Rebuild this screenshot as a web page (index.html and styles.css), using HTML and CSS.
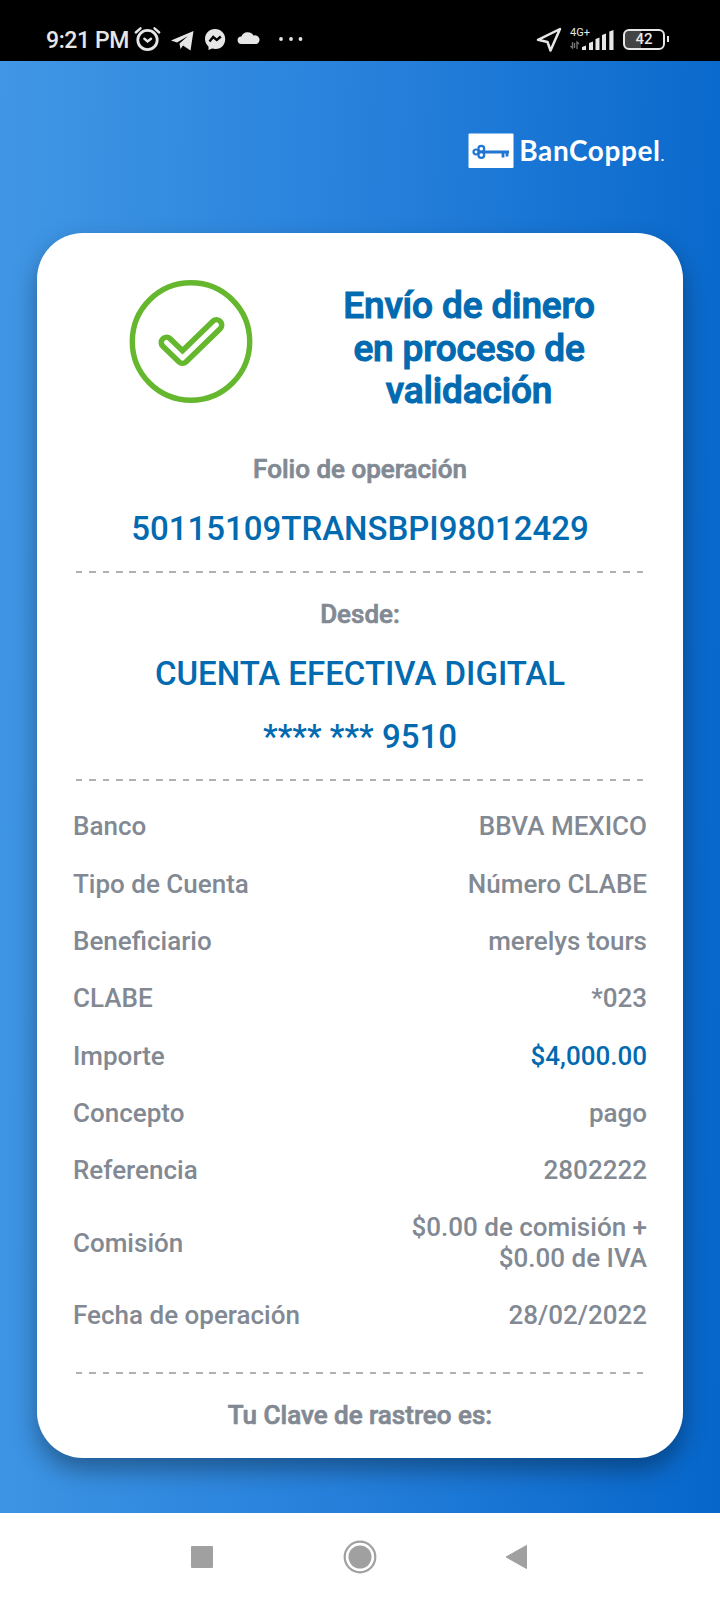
FILE: index.html
```html
<!DOCTYPE html>
<html lang="es">
<head>
    <meta charset="UTF-8">
    <meta name="viewport" content="width=device-width, initial-scale=1.0">
    <title>BanCoppel</title>
    <link rel="stylesheet" href="styles.css">
</head>
<body>
    <div class="status-bar">
        <span class="time">9:21 PM</span>
        <svg width="174" height="30" viewBox="0 0 174 30">
            <!-- alarm -->
            <g fill="none" stroke="#e6e6e6" stroke-linecap="round">
                <circle cx="13.5" cy="16" r="9.7" stroke-width="2.8"/>
                <path d="M1.8 8.5 L6.5 4.3 M25.2 8.5 L20.5 4.3" stroke-width="2.4"/>
                <path d="M10.3 14.7 L13.5 17.5 L17 14.7" stroke-width="2.4"/>
            </g>
            <!-- telegram -->
            <path d="M37 16.5 L59.5 7 L56.5 26.5 L49 21.5 L46.5 25 L45.5 19.5 L54 12 L43 18.5 Z" fill="#e6e6e6"/>
            <!-- messenger -->
            <path d="M81 5 C75 5 71 9.5 71 15 C71 18.2 72.5 20.7 74.5 22.5 L74.5 26 L78 24.5 C86.5 26.7 91.2 21 91.2 15 C91.2 9.5 87 5 81 5 Z" fill="#e6e6e6"/>
            <path d="M75.5 17.5 L79.2 13 L82.8 16 L86.8 12.5" fill="none" stroke="#000" stroke-width="2.4"/>
            <!-- cloud -->
            <path d="M107.5 20 A3.8 3.8 0 0 1 107.3 12.4 A7 7 0 0 1 119.5 11.5 A4.3 4.3 0 0 1 122.5 20 Z" fill="#e6e6e6"/>
            <g fill="#e6e6e6">
                <circle cx="147" cy="15" r="1.9"/>
                <circle cx="157" cy="15" r="1.9"/>
                <circle cx="166.5" cy="15" r="1.9"/>
            </g>
        </svg>
        <div class="status-right">
            <svg width="26" height="28" viewBox="0 0 26 28">
                <path d="M2 14.8 L24 4 L14.5 25.5 L11.5 17 Z" fill="none" stroke="#e6e6e6" stroke-width="2.5" stroke-linejoin="round"/>
            </svg>
            <div class="signal">
                <span class="network">4G+</span>
                <svg width="44" height="24" viewBox="0 0 44 24">
                    <path d="M2.5 15 V21 L0.5 19 M4.5 21 V16 M7 22 V15 L9 17" fill="none" stroke="#777" stroke-width="1.3"/>
                    <path d="M12 20 L16 18.5 V23 H12 Z M19 16 L23 14.5 V23 H19 Z M25.5 12 L29.5 10.5 V23 H25.5 Z M32 8 L36 6.5 V23 H32 Z M39.3 4.5 L43.5 3 V23 H39.3 Z" fill="#e6e6e6"/>
                </svg>
            </div>
            <div class="battery"><span>42</span></div>
        </div>
    </div>

    <div class="screen">
        <div class="brand">
            <svg width="46" height="36" viewBox="0 0 46 36">
                <rect x="0.5" y="0.5" width="45" height="34.5" rx="1" fill="#fff"/>
                <g fill="none" stroke="#2076d2" stroke-width="2.2">
                    <circle cx="8" cy="19" r="2.5"/>
                    <circle cx="13.3" cy="15.8" r="2.9"/>
                    <circle cx="13.3" cy="22" r="2.9"/>
                    <path d="M16 19 H41 M35 19 V24.5 M39 19 V23.5" stroke-width="2.8"/>
                </g>
            </svg>
            <span class="brand-name">BanCoppel<small>.</small></span>
        </div>

        <div class="card">
            <div class="card-header">
                <svg width="124" height="124" viewBox="0 0 124 124">
                    <circle cx="62" cy="61.5" r="58.7" fill="none" stroke="#65b72e" stroke-width="5.4"/>
                    <g fill="none" stroke-linecap="round" stroke-linejoin="round">
                        <path d="M37.5 62.5 L53.5 78 L87.5 45" stroke="#65b72e" stroke-width="16"/>
                        <path d="M37.5 62.5 L53.5 78 L87.5 45" stroke="#fff" stroke-width="5"/>
                    </g>
                </svg>
                <h1>Envío de dinero en proceso de validación</h1>
            </div>

            <h2>Folio de operación</h2>
            <p class="highlight">50115109TRANSBPI98012429</p>
            <div class="divider"></div>

            <h2>Desde:</h2>
            <p class="highlight">CUENTA EFECTIVA DIGITAL</p>
            <p class="highlight">**** *** 9510</p>
            <div class="divider"></div>

            <div class="details">
                <div class="row">
                    <span>Banco</span>
                    <span>BBVA MEXICO</span>
                </div>
                <div class="row">
                    <span>Tipo de Cuenta</span>
                    <span>Número CLABE</span>
                </div>
                <div class="row">
                    <span>Beneficiario</span>
                    <span>merelys tours</span>
                </div>
                <div class="row">
                    <span>CLABE</span>
                    <span>*023</span>
                </div>
                <div class="row">
                    <span>Importe</span>
                    <span class="amount">$4,000.00</span>
                </div>
                <div class="row">
                    <span>Concepto</span>
                    <span>pago</span>
                </div>
                <div class="row">
                    <span>Referencia</span>
                    <span>2802222</span>
                </div>
                <div class="row">
                    <span>Comisión</span>
                    <span>$0.00 de comisión +<br>$0.00 de IVA</span>
                </div>
                <div class="row">
                    <span>Fecha de operación</span>
                    <span>28/02/2022</span>
                </div>
            </div>
            <div class="divider"></div>

            <h2>Tu Clave de rastreo es:</h2>
        </div>
    </div>

    <div class="nav-bar">
        <svg width="34" height="34" viewBox="0 0 34 34">
            <rect x="6" y="6" width="22" height="22" rx="1" fill="#a0a0a0"/>
        </svg>
        <svg width="34" height="34" viewBox="0 0 34 34">
            <circle cx="17" cy="17" r="15.3" fill="none" stroke="#a0a0a0" stroke-width="2.2"/>
            <circle cx="17" cy="17" r="11.5" fill="#a0a0a0"/>
        </svg>
        <svg width="34" height="34" viewBox="0 0 34 34">
            <path d="M5 17 L25.5 5.5 V28.5 Z" fill="#a0a0a0" stroke="#a0a0a0" stroke-linejoin="round"/>
        </svg>
    </div>
</body>
</html>
```

FILE: styles.css
```css
* {
    box-sizing: border-box;
}

body {
    font-family: Roboto, sans-serif;
    margin: 0;
    width: 720px;
    height: 1600px;
    display: flex;
    flex-direction: column;
    overflow: hidden;
    background-color: white;
}

svg {
    display: block;
    flex-shrink: 0;
}

.status-bar {
    height: 61px;
    padding: 17px 51px 0 46px;
    display: flex;
    flex-shrink: 0;
    align-items: center;
    background-color: black;
    color: #e6e6e6;
}

.time {
    width: 88px;
    padding-top: 2px;
    font-size: 23px;
    font-weight: 500;
    letter-spacing: -0.4px;
    white-space: nowrap;
}

.status-right {
    display: flex;
    align-items: center;
    margin-left: auto;
}

.signal {
    position: relative;
    margin: 0 9px 0 8px;
}

.network {
    position: absolute;
    top: -1px;
    left: 0;
    font-size: 11px;
}

.battery {
    position: relative;
    width: 42px;
    height: 21px;
    margin: 1px 4px 0 0;
    border: 2.5px solid #e6e6e6;
    border-radius: 6px;
    background: linear-gradient(to right, #444 42%, black 42%);
    font-size: 15px;
    font-weight: 500;
    line-height: 17px;
    text-align: center;
}

.battery::after {
    content: "";
    position: absolute;
    top: 5px;
    right: -6px;
    width: 2px;
    height: 6px;
    background-color: #e6e6e6;
}

.screen {
    height: 1452px;
    flex-shrink: 0;
    padding: 72px 37px 0;
    background: linear-gradient(92deg, #4197e5 0%, #2680db 50%, #0666ca 100%);
}

.brand {
    display: flex;
    align-items: center;
    justify-content: flex-end;
    height: 36px;
    margin: 0 19px 64px 0;
    color: white;
}

.brand-name {
    margin-left: 5px;
    padding-top: 4px;
    font-family: Lato, sans-serif;
    font-size: 28px;
    font-weight: bold;
    line-height: 32px;
    letter-spacing: 0.6px;
}

.brand-name small {
    font-size: 14px;
    letter-spacing: 0;
}

.card {
    height: 1225px;
    padding: 47px 38px 0;
    border-radius: 46px;
    background-color: white;
    box-shadow: 0 12px 24px rgba(0, 0, 0, 0.35);
}

.card-header {
    display: flex;
    height: 125px;
    padding-left: 54px;
}

h1,
h2 {
    font-weight: 500;
    text-align: center;
}

h1 {
    width: 270px;
    margin: 5px 0 0 81px;
    color: #026ab0;
    font-size: 37px;
    line-height: 42.6px;
    letter-spacing: -0.15px;
    -webkit-text-stroke: 1.1px #026ab0;
}

h2 {
    margin: 0;
    color: #828993;
    font-size: 26px;
    line-height: 30px;
    -webkit-text-stroke: 0.7px #828993;
}

.card-header + h2 {
    margin-top: 49px;
}

.highlight {
    margin: 26px 0 0;
    color: #026ab0;
    font-size: 33px;
    font-weight: 500;
    line-height: 38px;
    text-align: center;
}

.highlight + .highlight {
    margin-top: 25px;
}

.divider {
    height: 2px;
    margin: 23px 1px 26px;
    background: repeating-linear-gradient(to right, #b0b0b0 0 6.5px, transparent 6.5px 13.35px);
}

.details {
    margin: -9px -2px 28px;
}

.row {
    display: flex;
    justify-content: space-between;
    align-items: center;
    padding: 13.4px 0;
    color: #828993;
    font-size: 26px;
    font-weight: 500;
    line-height: 30.5px;
}

.row span:last-child {
    text-align: right;
}

.row .amount {
    color: #026ab0;
}

.nav-bar {
    display: flex;
    flex: 1;
    align-items: center;
    justify-content: center;
    gap: 124px;
    background-color: white;
}
```
